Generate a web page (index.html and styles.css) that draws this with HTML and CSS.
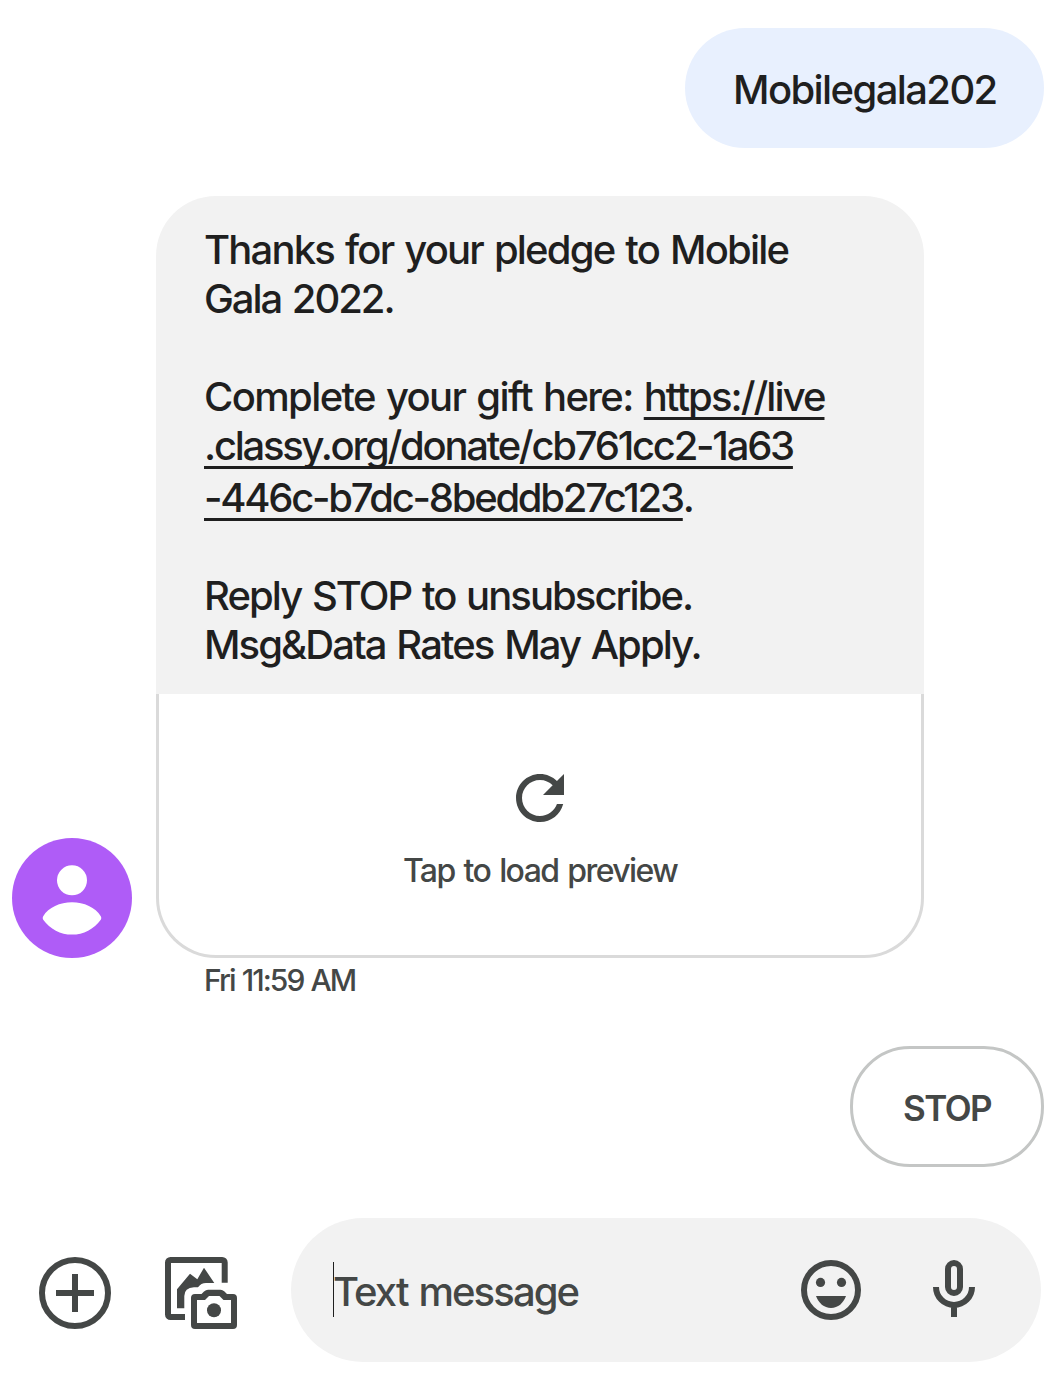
FILE: index.html
```
<!DOCTYPE html>
<html lang="en">
<head>
<meta charset="utf-8">
<title>Messages</title>
<link rel="stylesheet" href="styles.css">
</head>
<body>
<main class="thread">
  <div class="bubble-out">Mobilegala202</div>

  <section class="incoming">
    <svg class="avatar" viewBox="0 0 120 120" aria-hidden="true">
      <circle cx="60" cy="60" r="60" fill="#af5cf7"/>
      <circle cx="60" cy="42.3" r="15" fill="#fff"/>
      <path fill="#fff" d="M31.2 78.200C36.500 69.500 48 64.300 60 64.300S83.500 69.500 88.800 78.200Q89.900 80 88.800 81.700C82 91 71.500 96.600 60 96.600S38 91 31.200 81.700Q30.100 80 31.200 78.200Z"/>
    </svg>
    <div class="card">
      <div class="message">
        <p class="line l-thanks">Thanks for your pledge to Mobile</p>
        <p class="line l-gala">Gala 2022.</p>
        <p class="line gap-above l-complete">Complete your gift here: <a class="link l-host">https://live</a></p>
        <p class="line"><a class="link l-path">.classy.org/donate/cb761cc2-1a63</a></p>
        <p class="line line-low"><a class="link l-id">-446c-b7dc-8beddb27c123</a>.</p>
        <p class="line gap-above l-reply">Reply STOP to unsubscribe.</p>
        <p class="line l-rates">Msg&amp;Data Rates May Apply.</p>
      </div>
      <div class="preview">
        <svg class="refresh" viewBox="0 0 24 24" aria-hidden="true"><path d="M17.65 6.35C16.2 4.9 14.21 4 12 4c-4.42 0-7.99 3.58-7.99 8s3.57 8 7.99 8c3.73 0 6.84-2.55 7.73-6h-2.08c-.82 2.33-3.04 4-5.65 4-3.31 0-6-2.69-6-6s2.69-6 6-6c1.66 0 3.14.69 4.22 1.78L13 11h7V4l-2.35 2.35z"/></svg>
        <span class="preview-label">Tap to load preview</span>
      </div>
    </div>
  </section>
  <div class="time">Fri 11:59 AM</div>

  <button class="chip">STOP</button>

  <footer class="composer">
    <svg class="icon add" viewBox="0 0 72 72" aria-hidden="true">
      <circle cx="36" cy="36" r="33" fill="none" stroke="#444746" stroke-width="6"/>
      <path d="M33 17h6v16h16v6H39v16h-6V39H17v-6h16z"/>
    </svg>
    <svg class="icon gallery" viewBox="0 0 72 72" aria-hidden="true">
      <path fill="none" stroke="#444746" stroke-width="6" d="M59.700 25.700V5.500A2.500 2.500 0 0 0 57.200 3H5.500A2.500 2.500 0 0 0 3 5.500V57.500A2.500 2.500 0 0 0 5.500 60H20"/>
      <path d="M12 32.300 25 16.700 32.300 22.300 39 10.700 49.300 26H41Q36 26 33 30.300H29Q19.300 31 19.300 39V51.300H12Z"/>
      <path fill-rule="evenodd" d="M30 37H36.500L39 34.500Q41 32.700 43 32.700H55.500Q57.500 32.700 59.500 34.500L62 37H68A4 4 0 0 1 72 41V68A4 4 0 0 1 68 72H30A4 4 0 0 1 26 68V41A4 4 0 0 1 30 37ZM32 43V66H66V43H58.500L54.500 39H44L40 43Z"/>
      <circle cx="49" cy="53.300" r="7"/>
    </svg>
    <div class="field">
      <span class="caret"></span>
      <span class="placeholder">Text message</span>
      <svg class="icon smile" viewBox="0 0 60 60" aria-hidden="true">
        <circle cx="30" cy="30" r="27" fill="none" stroke="#444746" stroke-width="6"/>
        <circle cx="19.500" cy="22.400" r="4.600"/>
        <circle cx="40.500" cy="22.400" r="4.600"/>
        <path d="M15 36H45C42.500 43 37 48 30 48S17.500 43 15 36Z"/>
      </svg>
      <svg class="icon mic" viewBox="0 0 42 57" aria-hidden="true">
        <g fill="none" stroke="#444746" stroke-width="6">
          <rect x="15" y="3" width="12" height="30" rx="6"/>
          <path d="M3 27a18 18 0 0 0 36 0M21 45v12"/>
        </g>
      </svg>
    </div>
  </footer>
</main>
</body>
</html>
```
FILE: styles.css
```
* { box-sizing: border-box; }

body {
  margin: 0;
  background: #fff;
  color: #1f1f1f;
  font-family: Inter, "Liberation Sans", sans-serif;
  font-size: 40px;
  font-weight: 450;
  line-height: 49px;
  word-spacing: 2px;
}

.thread {
  display: flex;
  flex-direction: column;
  width: 1055px;
  height: 1385px;
  padding: 28px 11px 23px 12px;
}

.bubble-out {
  align-self: flex-end;
  width: 359px;
  height: 120px;
  padding: 37px 0 0 48px;
  border-radius: 60px;
  background: #e8f0fe;
  letter-spacing: -1.6px;
  white-space: nowrap;
}

.incoming {
  display: flex;
  align-items: flex-end;
  gap: 24px;
  margin-top: 48px;
}

.avatar { width: 120px; height: 120px; }

.card { width: 768px; }

.message {
  height: 498px;
  padding: 29px 48px 0;
  border-radius: 60px 60px 0 0;
  background: #f2f2f2;
}

.line { margin: 0; height: 49px; white-space: nowrap; }
.gap-above { margin-top: 49px; }
.line-low { margin-top: 3px; }

.link {
  text-decoration: underline;
  text-decoration-thickness: 3px;
  text-decoration-skip-ink: none;
  text-underline-offset: 6px;
}

.l-thanks { letter-spacing: -1.79px; }
.l-gala { letter-spacing: -2.05px; }
.l-complete { letter-spacing: -1.64px; }
.l-host { letter-spacing: -1.94px; }
.l-path { letter-spacing: -2.25px; }
.l-id { letter-spacing: -2.26px; }
.l-reply { letter-spacing: -1.95px; }
.l-rates { letter-spacing: -1.93px; }

.preview {
  display: flex;
  flex-direction: column;
  align-items: center;
  height: 264px;
  padding-top: 68px;
  border: 3px solid #dadada;
  border-top: 0;
  border-radius: 0 0 60px 60px;
  color: #444746;
}

.refresh { width: 72px; height: 72px; fill: #444746; }

.preview-label {
  margin-top: 17px;
  font-size: 32px;
  line-height: 40px;
  letter-spacing: -1.6px;
}

.time {
  margin: 4px 0 0 192px;
  font-size: 30px;
  line-height: 36px;
  letter-spacing: -1.95px;
  word-spacing: 1px;
  color: #444746;
}

.chip {
  align-self: flex-end;
  width: 194px;
  height: 121px;
  margin-top: 48px;
  padding: 3px 0 0;
  border: 3px solid #c4c6c5;
  border-radius: 60px;
  background: #fff;
  color: #444746;
  font: 600 35px/42px Inter, "Liberation Sans", sans-serif;
  letter-spacing: -1.6px;
}

.composer {
  display: flex;
  align-items: center;
  margin-top: 51px;
  padding-left: 27px;
}

.icon { flex: none; fill: #444746; }
.add { width: 72px; height: 72px; margin-top: 6px; }
.gallery { width: 72px; height: 72px; margin: 6px 0 0 54px; }

.field {
  display: flex;
  align-items: center;
  width: 750px;
  height: 144px;
  margin: 0 -9px 0 54px;
  padding-left: 42px;
  flex: none;
  border-radius: 72px;
  background: #f2f2f2;
  color: #444746;
}

.caret { width: 1px; height: 55px; margin-bottom: 2px; background: #1f1f1f; }
.placeholder { width: 468px; margin-left: -1px; padding-top: 3px; letter-spacing: -1.9px; }
.smile { width: 60px; height: 60px; }
.mic { width: 42px; height: 57px; margin: 0 0 3px 72px; }
```
